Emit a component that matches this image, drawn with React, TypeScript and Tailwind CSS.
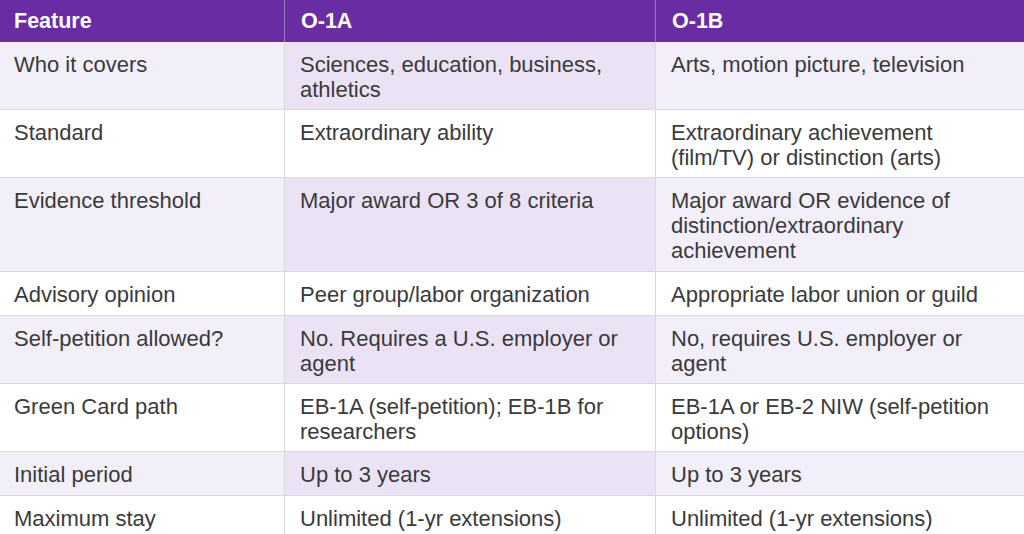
const rows: [string, string, string, string][] = [
  ["h-[68px]", "Who it covers", "Sciences, education, business, athletics", "Arts, motion picture, television"],
  ["h-[68px]", "Standard", "Extraordinary ability", "Extraordinary achievement (film/TV) or distinction (arts)"],
  ["h-[94px]", "Evidence threshold", "Major award OR 3 of 8 criteria", "Major award OR evidence of distinction/extraordinary achievement"],
  ["h-[44px]", "Advisory opinion", "Peer group/labor organization", "Appropriate labor union or guild"],
  ["h-[68px]", "Self-petition allowed?", "No. Requires a U.S. employer or agent", "No, requires U.S. employer or agent"],
  ["h-[68px]", "Green Card path", "EB-1A (self-petition); EB-1B for researchers", "EB-1A or EB-2 NIW (self-petition options)"],
  ["h-[44px]", "Initial period", "Up to 3 years", "Up to 3 years"],
  ["h-[44px]", "Maximum stay", "Unlimited (1-yr extensions)", "Unlimited (1-yr extensions)"],
]

export default function App() {
  return (
    <div className="w-[1024px] h-[534px] overflow-hidden bg-white font-['Liberation_Sans',Arial,sans-serif]">
      <div className="grid grid-cols-[285px_371px_368px]">
        <div className="h-[42px] bg-[#6a2ca2] border-r border-[#9a78c2] pl-[14px] flex items-center text-[21.5px] font-bold text-white">Feature</div>
        <div className="h-[42px] bg-[#6a2ca2] border-r border-[#9a78c2] pl-[16px] flex items-center text-[21.5px] font-bold text-white">O-1A</div>
        <div className="h-[42px] bg-[#6a2ca2] pl-[16px] flex items-center text-[21.5px] font-bold text-white">O-1B</div>
        {rows.map((r, i) => {
          const shaded = i % 2 === 0
          return (
            <div key={i} className="contents">
              <div className={`${r[0]} border-r border-b border-[#d9d9d9] pl-[14px] pr-3 pt-[10px] text-[22px] leading-[25px] text-[#3a3a3a] ${shaded ? "bg-[#f3eff9]" : "bg-white"}`}>{r[1]}</div>
              <div className={`${r[0]} border-r border-b border-[#d9d9d9] pl-[15px] pr-3 pt-[10px] text-[22px] leading-[25px] text-[#3a3a3a] ${shaded ? "bg-[#ebe3f5]" : "bg-white"}`}>{r[2]}</div>
              <div className={`${r[0]} border-b border-[#d9d9d9] pl-[15px] pr-[14px] pt-[10px] text-[22px] leading-[25px] text-[#3a3a3a] ${shaded ? "bg-[#f2eefa]" : "bg-white"}`}>{r[3]}</div>
            </div>
          )
        })}
      </div>
    </div>
  )
}
